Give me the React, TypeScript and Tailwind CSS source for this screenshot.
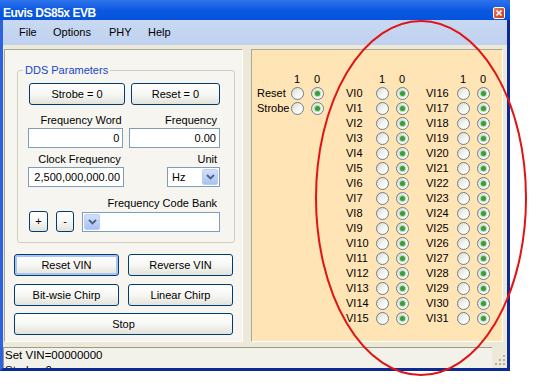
import React from 'react';

const Chevron = () => (
  <svg width="9" height="6" viewBox="0 0 9 6">
    <path d="M1 1 L4.5 4.5 L8 1" fill="none" stroke="#4d6185" strokeWidth="1.8" />
  </svg>
);

const DropButton = () => (
  <div className="flex h-full w-[16px] items-center justify-center rounded-[2px] border border-[#b9cdf6] bg-gradient-to-b from-[#d3e0fb] to-[#a9c1f1]">
    <Chevron />
  </div>
);

const XpButton = ({ label, className, focused }: { label: string; className: string; focused?: boolean }) => (
  <button
    className={`${className} flex items-center justify-center whitespace-nowrap rounded-[3px] border border-[#003c74] bg-gradient-to-b from-white via-[#f7f7f4] to-[#e3e2da] text-[11px] font-normal leading-none text-black ${
      focused ? 'shadow-[inset_0_0_0_2px_#a8c4f3]' : ''
    }`}
  >
    {label}
  </button>
);

const Radio = ({ on }: { on?: boolean }) => (
  <div className="flex h-[15px] w-[20px] items-center justify-center">
    <div className="flex h-[13px] w-[13px] items-center justify-center rounded-full border border-[#6f7f8d] bg-gradient-to-br from-[#d8d7cf] via-[#f4f4f0] to-white">
      {on && <div className="h-[5px] w-[5px] rounded-full bg-[#3a9c3a] shadow-[0_0_0_1px_#b4dcb0]" />}
    </div>
  </div>
);

const RadioColumn = ({ rows, labelW, className }: { rows: string[]; labelW: string; className: string }) => (
  <div className={`flex flex-col ${className}`}>
    <div className="flex h-[13px] leading-[13px]">
      <div className={labelW} />
      <div className="w-[20px] text-center">1</div>
      <div className="w-[20px] text-center">0</div>
    </div>
    {rows.map((r) => (
      <div key={r} className="flex h-[15px] items-center">
        <div className={`${labelW} whitespace-nowrap leading-[15px]`}>{r}</div>
        <Radio />
        <Radio on />
      </div>
    ))}
  </div>
);

const vi = (from: number) => Array.from({ length: 16 }, (_, i) => `VI${from + i}`);

export default function App() {
  return (
    <div className="relative h-[390px] w-[538px] overflow-hidden bg-white font-['Liberation_Sans',Arial,sans-serif] text-[11px] text-black">
      <div className="flex h-[371px] w-[510px] flex-col">
        {/* title bar */}
        <div className="flex h-[20px] items-start justify-between bg-gradient-to-b from-[#2d74ea] via-[#0b58e2] to-[#0652dc] pl-[3px] pr-[5px]">
          <span className="pt-[6px] text-[12px] font-bold leading-[14px] tracking-[-0.5px] text-white">Euvis DS85x EVB</span>
          <div className="mt-[7px] flex h-[12px] w-[12px] items-center justify-center rounded-[2px] border border-white bg-gradient-to-br from-[#e8795a] to-[#c23a18]">
            <svg width="8" height="8" viewBox="0 0 8 8">
              <path d="M1.5 1.5 L6.5 6.5 M6.5 1.5 L1.5 6.5" stroke="white" strokeWidth="1.6" />
            </svg>
          </div>
        </div>

        <div className="flex flex-1 flex-col border-b-[3px] border-l-[3px] border-r-[3px] border-b-[#0b2b93] border-l-[#2a62df] border-r-[#0b2b93]">
          {/* menu */}
          <div className="flex h-[25px] items-center bg-gradient-to-b from-[#c9d9f3] to-[#bfd1ef] pl-[16px] leading-none">
            <span className="w-[34px]">File</span>
            <span className="w-[56px]">Options</span>
            <span className="w-[39px]">PHY</span>
            <span>Help</span>
          </div>

          {/* client */}
          <div className="flex h-[302px] bg-[#ece9d8] pl-[1px] pt-[4px]">
            {/* left panel */}
            <div className="flex h-[293px] w-[239px] flex-col border border-b-white border-l-[#aca899] border-r-white border-t-[#aca899] bg-[#f6f5f0]">
              <div className="relative ml-[12px] mt-[20px] h-[173px] w-[218px] rounded-[3px] border border-[#d0d0bf]">
                <span className="absolute -top-[7px] left-[5px] whitespace-nowrap bg-[#f6f5f0] px-[2px] leading-[13px] text-[#1846c8]">DDS Parameters</span>
                <div className="flex w-[202px] flex-col pl-[11px] pt-[12px]">
                  <div className="flex gap-[6px]">
                    <XpButton label="Strobe = 0" className="h-[22px] w-[96px]" />
                    <XpButton label="Reset = 0" className="h-[22px] w-[89px]" />
                  </div>
                  <div className="mt-[8px] flex h-[14px] whitespace-nowrap leading-[14px]">
                    <div className="flex w-[96px] justify-center pl-[8px]">Frequency Word</div>
                    <div className="ml-[6px] w-[89px] pr-[3px] text-right">Frequency</div>
                  </div>
                  <div className="-ml-[1px] mt-[1px] flex gap-[6px]">
                    <div className="flex h-[20px] w-[96px] items-center justify-end border border-[#7f9db9] bg-white pr-[3px]">0</div>
                    <div className="flex h-[20px] w-[91px] items-center justify-end border border-[#7f9db9] bg-white pr-[3px]">0.00</div>
                  </div>
                  <div className="mt-[4px] flex h-[14px] whitespace-nowrap leading-[14px]">
                    <div className="flex w-[96px] justify-center pl-[5px]">Clock Frequency</div>
                    <div className="ml-[6px] w-[89px] pr-[3px] text-right">Unit</div>
                  </div>
                  <div className="-ml-[1px] mt-[1px] flex">
                    <div className="flex h-[20px] w-[96px] items-center justify-end whitespace-nowrap border border-[#7f9db9] bg-white pr-[3px]">2,500,000,000.00</div>
                    <div className="ml-[43px] flex h-[20px] w-[53px] items-center justify-between border border-[#7f9db9] bg-white p-[1px] pl-[4px]">
                      <span>Hz</span>
                      <DropButton />
                    </div>
                  </div>
                  <div className="mt-[9px] h-[14px] whitespace-nowrap pr-[3px] text-right leading-[14px]">Frequency Code Bank</div>
                  <div className="mt-[1px] flex h-[21px]">
                    <XpButton label="+" className="h-[21px] w-[19px]" />
                    <XpButton label="-" className="ml-[8px] h-[21px] w-[18px]" />
                    <div className="ml-[8px] mt-[1px] flex h-[20px] w-[138px] border border-[#7f9db9] bg-white p-[1px]">
                      <DropButton />
                    </div>
                  </div>
                </div>
              </div>

              <div className="ml-[9px] mt-[11px] flex gap-[9px]">
                <XpButton label="Reset VIN" className="h-[22px] w-[105px]" focused />
                <XpButton label="Reverse VIN" className="h-[22px] w-[105px]" />
              </div>
              <div className="ml-[9px] mt-[8px] flex gap-[9px]">
                <XpButton label="Bit-wsie Chirp" className="h-[22px] w-[105px]" />
                <XpButton label="Linear Chirp" className="h-[22px] w-[105px]" />
              </div>
              <div className="ml-[9px] mt-[7px]">
                <XpButton label="Stop" className="h-[22px] w-[219px]" />
              </div>
            </div>

            {/* right panel */}
            <div className="ml-[8px] flex h-[293px] w-[252px] items-start border border-b-white border-l-[#aca899] border-r-white border-t-[#aca899] bg-[#ffe4b5] pl-[5px] pt-[23px]">
              <RadioColumn rows={['Reset', 'Strobe']} labelW="w-[30px]" className="" />
              <RadioColumn rows={vi(0)} labelW="w-[26px]" className="ml-[19px]" />
              <RadioColumn rows={vi(16)} labelW="w-[27px]" className="ml-[14px]" />
            </div>
          </div>

          {/* status bar */}
          <div className="flex h-[21px] bg-[#ece9d8]">
            <div className="flex-1 overflow-hidden border-l border-t border-l-[#9d9a8a] border-t-[#9d9a8a] bg-[#f2f1ea] pl-[1px] text-[11.5px] leading-[15px]">
              <div>Set VIN=00000000</div>
              <div>Strobe=0</div>
            </div>
            <div className="flex w-[15px] items-end justify-end pb-[2px] pr-[1px]">
              <svg width="11" height="11" viewBox="0 0 11 11">
                {[
                  [8, 0],
                  [8, 4],
                  [4, 4],
                  [8, 8],
                  [4, 8],
                  [0, 8],
                ].map(([x, y]) => (
                  <rect key={`${x}-${y}`} x={x} y={y} width="2" height="2" fill="#b3b0a0" />
                ))}
              </svg>
            </div>
          </div>
        </div>
      </div>

      {/* red annotation ellipse */}
      <svg className="pointer-events-none absolute left-0 top-0" width="538" height="390">
        <ellipse cx="421" cy="198" rx="105" ry="177" fill="none" stroke="#e11414" strokeWidth="2" />
      </svg>
    </div>
  );
}
